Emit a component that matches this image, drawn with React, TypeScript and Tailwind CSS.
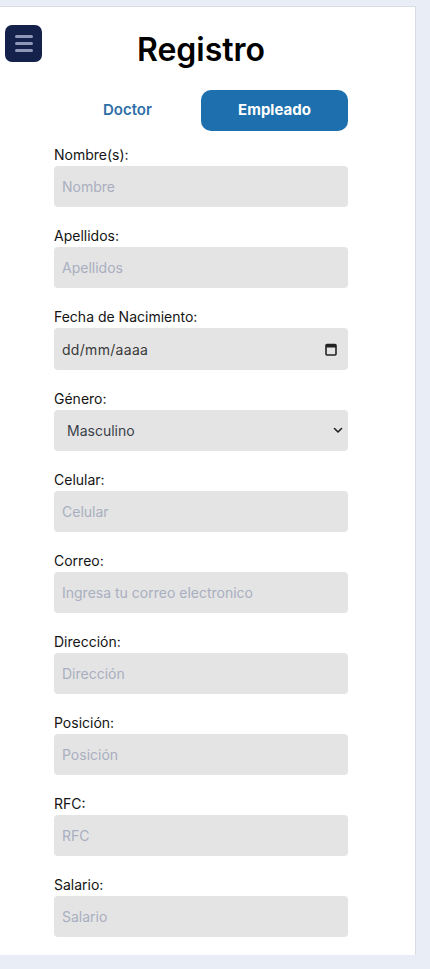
import * as React from "react";

const fields: { label: string; placeholder: string }[] = [
  { label: "Celular:", placeholder: "Celular" },
  { label: "Correo:", placeholder: "Ingresa tu correo electronico" },
  { label: "Dirección:", placeholder: "Dirección" },
  { label: "Posición:", placeholder: "Posición" },
  { label: "RFC:", placeholder: "RFC" },
  { label: "Salario:", placeholder: "Salario" },
];

function Field({ label, children }: { label: string; children: React.ReactNode }) {
  return (
    <div className="mb-[19px] last:mb-0">
      <label className="block h-5 text-[14px] leading-5 text-[#141414] mb-px">{label}</label>
      {children}
    </div>
  );
}

function TextInput({ placeholder }: { placeholder: string }) {
  return (
    <input
      type="text"
      placeholder={placeholder}
      className="block w-full h-[41px] rounded-[4px] bg-[#e4e4e4] px-2 text-[14px] text-[#333] placeholder:text-[#a9afc0] outline-none"
    />
  );
}

export default function App() {
  return (
    <div className="min-h-[969px] bg-[#e9edf5] pt-[6px] pb-[14px]" style={{ fontFamily: "Inter, 'Noto Sans', sans-serif" }}>
      <div className="relative w-[416px] bg-white border-t border-r border-[#d8dce4] pt-[23px] pb-[18px]">
        <button className="absolute left-[5px] top-[18px] w-[37px] h-[37px] rounded-[7px] bg-[#14214a] flex flex-col items-center justify-center gap-[4px]">
          <span className="block w-[18px] h-[3px] rounded-full bg-[#8f98b8]" />
          <span className="block w-[18px] h-[3px] rounded-full bg-[#8f98b8]" />
          <span className="block w-[18px] h-[3px] rounded-full bg-[#8f98b8]" />
        </button>

        <div className="ml-[54px] w-[294px]">
          <h1 className="text-center text-[32px] leading-10 font-semibold text-black">Registro</h1>

          <div className="mt-5 flex h-[41px]">
            <button className="flex-1 text-[15px] font-semibold text-[#2f6fa8]">Doctor</button>
            <button className="flex-1 rounded-[10px] bg-[#1d70ad] text-[15px] font-bold text-white">Empleado</button>
          </div>

          <form className="mt-[14px]">
            <Field label="Nombre(s):">
              <TextInput placeholder="Nombre" />
            </Field>
            <Field label="Apellidos:">
              <TextInput placeholder="Apellidos" />
            </Field>
            <Field label="Fecha de Nacimiento:">
              <div className="flex items-center justify-between h-[42px] rounded-[4px] bg-[#e4e4e4] pl-2 pr-[11px]">
                <span className="text-[14px] text-[#3a3a3a] tracking-[0.3px]">dd/mm/aaaa</span>
                <svg width="12" height="13" viewBox="0 0 12 13" fill="none">
                  <rect x="1" y="1.5" width="10" height="10.5" rx="1" stroke="#222" strokeWidth="1.6" />
                  <rect x="1" y="1.5" width="10" height="3" fill="#222" />
                </svg>
              </div>
            </Field>
            <Field label="Género:">
              <div className="flex items-center justify-between h-[41px] rounded-[4px] bg-[#e4e4e4] pl-[13px] pr-[5px]">
                <span className="text-[14px] text-[#3b3f4a]">Masculino</span>
                <svg width="10" height="7" viewBox="0 0 10 7" fill="none">
                  <path d="M1.5 1.5 L5 5 L8.5 1.5" stroke="#222" strokeWidth="1.6" strokeLinecap="round" strokeLinejoin="round" />
                </svg>
              </div>
            </Field>
            {fields.map((f) => (
              <Field key={f.label} label={f.label}>
                <TextInput placeholder={f.placeholder} />
              </Field>
            ))}
          </form>
        </div>
      </div>
    </div>
  );
}
